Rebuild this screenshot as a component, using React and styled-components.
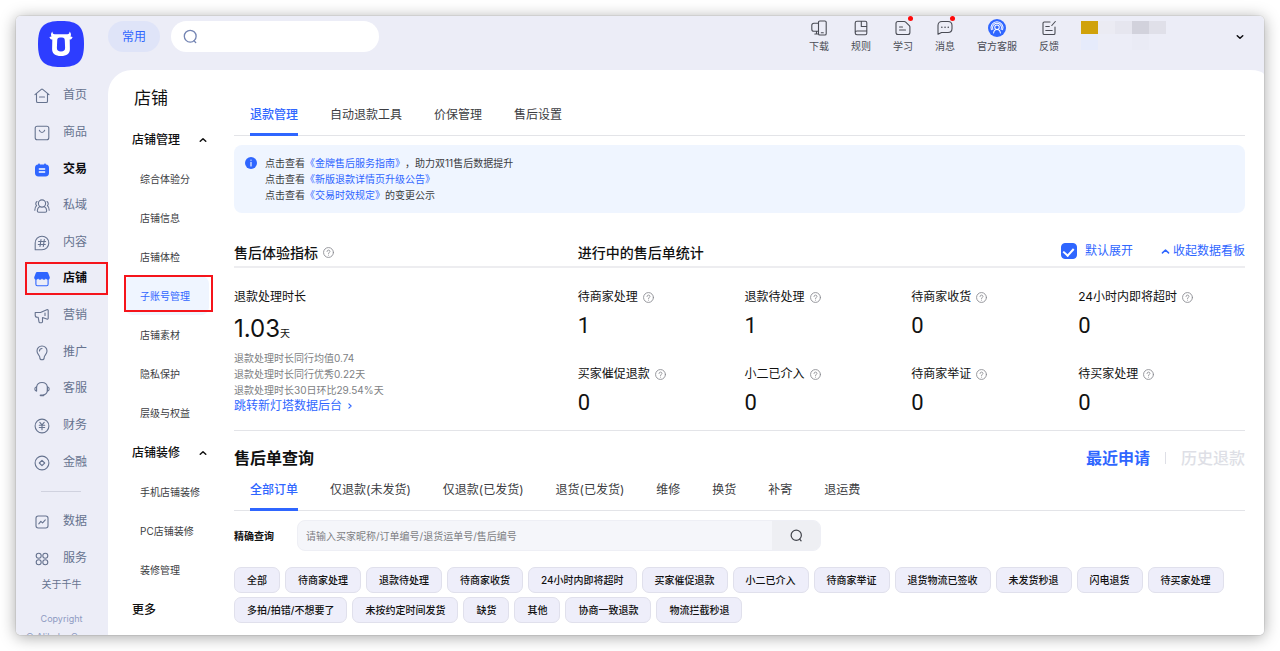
import React, { useState } from 'react';
import styled, { createGlobalStyle, css } from 'styled-components';

const GlobalStyle = createGlobalStyle`
  * {
    box-sizing: border-box;
  }

  body {
    margin: 0;
    background: #ffffff;
    color: #111111;
    font-family: Inter, 'Noto Sans CJK SC', sans-serif;
    font-size: 12px;
    text-spacing-trim: space-all;
  }

  button,
  input {
    border: 0;
    padding: 0;
    background: none;
    color: inherit;
    font: inherit;
  }

  button {
    cursor: pointer;
  }

  a {
    color: inherit;
    text-decoration: none;
  }

  ul,
  h1,
  h2,
  h3,
  p,
  dl,
  dd {
    margin: 0;
    padding: 0;
    list-style: none;
  }
`;

const blue = '#2f66ff';

const Page = styled.div`
  height: 100vh;
  min-width: 1100px;
  padding: 16px;
`;

const Window = styled.div`
  display: flex;
  height: 100%;
  overflow: hidden;
  border-radius: 5px;
  background: #ecedf7;
`;

const Shadow = styled.div`
  height: 100%;
  border-radius: 5px;
  box-shadow: 0 0 0 1px rgba(0, 0, 0, 0.06), 0 2px 16px rgba(0, 0, 0, 0.36);
`;

const Sidebar = styled.aside`
  display: flex;
  flex: none;
  flex-direction: column;
  width: 92px;
  padding: 5px 0 0 9px;
  color: #66738f;
`;

const Logo = styled.svg`
  flex: none;
  width: 46px;
  height: 46px;
  margin: 0 0 11px 13px;
`;

const SideList = styled.ul`
  display: grid;
  flex: none;
  grid-auto-rows: 1fr;
  min-height: ${({ $height }) => $height}px;
`;

const marked = css`
  position: relative;

  &::after {
    content: '';
    position: absolute;
    inset: ${({ $inset }) => $inset};
    border: 2px solid #f5141b;
  }
`;

const SideItem = styled.li`
  ${({ $marked }) => $marked && marked}
`;

const SideLink = styled.a`
  display: flex;
  align-items: center;
  gap: 13px;
  height: 100%;
  padding-left: 9px;
  color: ${({ $active }) => ($active ? '#0b0b0f' : 'inherit')};
  font-weight: ${({ $active }) => ($active ? 700 : 400)};
  line-height: 16px;

  svg {
    color: ${({ $active }) => ($active ? blue : 'inherit')};
  }
`;

const SideText = styled.span`
  padding-bottom: 2px;
`;

const SideDivider = styled.hr`
  flex: none;
  width: 40px;
  height: 1px;
  margin: 10px 0 12px 16px;
  border: 0;
  background: #d0d2df;
`;

const About = styled.a`
  padding-right: 10px;
  font-size: 10px;
  line-height: 14px;
  text-align: center;
`;

const Copyright = styled.p`
  margin-top: 19px;
  padding-right: 10px;
  color: #8e9bc2;
  font-size: 9px;
  line-height: 18px;
  text-align: center;
  white-space: nowrap;
`;

const Body = styled.div`
  display: flex;
  flex: 1;
  flex-direction: column;
  min-width: 0;
`;

const Header = styled.header`
  display: flex;
  flex: none;
  align-items: flex-start;
  height: 54px;
  padding: 5px 20px 0 0;
`;

const CommonButton = styled.button`
  width: 52px;
  height: 31px;
  margin-right: 11px;
  border-radius: 16px;
  background: #dfe4f8;
  color: ${blue};
  line-height: 29px;
`;

const GlobalSearch = styled.label`
  display: flex;
  align-items: center;
  gap: 8px;
  width: 208px;
  height: 31px;
  padding: 0 12px;
  border-radius: 16px;
  background: #ffffff;
  color: #7485b3;

  input {
    flex: 1;
    min-width: 0;
    outline: none;
  }
`;

const Tools = styled.nav`
  display: flex;
  gap: 22px;
  margin-left: auto;
`;

const Tool = styled.a`
  display: flex;
  flex-direction: column;
  align-items: center;
  color: #4a4c55;
  font-size: 10px;
  line-height: 14px;
  white-space: nowrap;
`;

const ToolIcon = styled.span`
  position: relative;
  display: flex;
  align-items: center;
  justify-content: center;
  height: 18px;
  margin: -2px 0 2px;

  &::after {
    content: '';
    position: absolute;
    top: -3px;
    right: -2px;
    display: ${({ $dot }) => ($dot ? 'block' : 'none')};
    width: 5px;
    height: 5px;
    border-radius: 50%;
    background: #ff0a0a;
  }
`;

const Account = styled.button`
  display: flex;
  align-items: flex-start;
  gap: 70px;
  margin-left: 22px;
`;

const Mosaic = styled.span`
  display: grid;
  grid-template-columns: repeat(5, 17px);
  grid-template-rows: 13px 16px;
`;

const Tile = styled.span`
  background: ${({ $color }) => $color};
`;

const AccountArrow = styled.span`
  display: flex;
  align-items: center;
  height: 31px;
  color: #0b0b0f;
`;

const Panel = styled.div`
  display: flex;
  flex: 1;
  min-height: 0;
  border-radius: 24px 14px 0 0 / 24px 5px 0 0;
  background: #ffffff;
`;

const Menu = styled.nav`
  flex: none;
  width: 126px;
  padding: 15px 21px 0 17px;
`;

const MenuTitle = styled.h1`
  padding: 0 0 8px 9px;
  font-size: 17px;
  font-weight: 400;
  line-height: 26px;
`;

const MenuGroup = styled.button`
  display: flex;
  align-items: center;
  justify-content: space-between;
  width: 100%;
  height: 20px;
  margin-top: 11px;
  padding: 0 6px 0 7px;
  font-weight: 500;
  line-height: 18px;
`;

const MenuList = styled.ul`
  padding-top: 9px;
`;

const MenuItem = styled.li`
  ${({ $marked }) => $marked && marked}
`;

const MenuLink = styled.a`
  display: flex;
  align-items: center;
  width: 84px;
  height: 39px;
  padding-left: 15px;
  border-radius: 8px;
  background: ${({ $active }) => ($active ? '#eff5ff' : 'none')};
  color: ${({ $active }) => ($active ? blue : '#3c3d42')};
  font-size: 10px;
  white-space: nowrap;
`;

const Main = styled.main`
  flex: 1;
  min-width: 0;
  padding: 24px 19px 0 0;
`;

const TabList = styled.div`
  display: flex;
  gap: 32px;
  padding: 0 16px;
  box-shadow: inset 0 -1px #e3e4e8;
`;

const Tab = styled.button`
  height: 42px;
  border-bottom: 3px solid ${({ $active }) => ($active ? blue : 'transparent')};
  color: ${({ $active }) => ($active ? blue : '#3c3d42')};
  font-weight: ${({ $active }) => ($active ? 500 : 400)};
  white-space: nowrap;
`;

const Notice = styled.section`
  display: flex;
  gap: 8px;
  margin-top: 9px;
  padding: 10px 11px;
  border-radius: 8px;
  background: #eff5ff;
  color: #3c3d42;
  font-size: 10px;
  line-height: 16px;

  svg {
    margin-top: 2px;
  }
`;

const Link = styled.a`
  color: ${blue};
`;

const Columns = styled.div`
  display: grid;
  grid-template-columns: 34fr 66fr;
`;

const BoardHeader = styled(Columns)`
  align-items: center;
  height: 29px;
  margin-top: 26px;
  border-bottom: 2px solid #ededf0;
`;

const BoardTitle = styled.h2`
  display: flex;
  align-items: center;
  gap: 5px;
  font-size: 14px;
  font-weight: 500;
  line-height: 20px;
`;

const BoardRight = styled.div`
  display: flex;
  align-items: center;
  justify-content: space-between;
`;

const BoardActions = styled.div`
  display: flex;
  align-items: center;
  gap: 28px;
  padding-bottom: 3px;
  color: ${blue};
  line-height: 16px;
`;

const CheckLabel = styled.label`
  display: flex;
  align-items: center;
  gap: 8px;
`;

const Checkbox = styled.input`
  display: grid;
  justify-content: center;
  width: 16px;
  height: 16px;
  margin: 0;
  border: 1px solid ${blue};
  border-radius: 4px;
  appearance: none;

  &:checked {
    background: ${blue};
  }

  &:checked::after {
    content: '';
    width: 5px;
    height: 8px;
    margin-top: 2px;
    border: solid #ffffff;
    border-width: 0 2px 2px 0;
    transform: rotate(42deg);
  }
`;

const Collapse = styled.button`
  display: flex;
  align-items: center;
  gap: 3px;
`;

const Board = styled(Columns)`
  padding: 20px 0 15px;
  border-bottom: 1px solid #e3e4e8;
`;

const Label = styled.dt`
  display: flex;
  align-items: center;
  gap: 5px;
  font-size: 12px;
  line-height: 18px;
  white-space: nowrap;
`;

const Duration = styled.dd`
  margin: 8px 0 6px;
  font-size: 24px;
  line-height: 30px;

  small {
    font-size: 10px;
    line-height: 10px;
  }
`;

const Comparison = styled.dd`
  color: #7e7f84;
  font-size: 10px;
  line-height: 16px;
`;

const BoardLink = styled.a`
  display: flex;
  align-items: center;
  gap: 5px;
  color: ${blue};
  line-height: 16px;
`;

const Stats = styled.div`
  display: grid;
  grid-template-columns: repeat(4, 1fr);
  align-content: start;
  row-gap: 27px;
`;

const StatValue = styled.dd`
  margin-top: 8px;
  font-family: Roboto, sans-serif;
  font-size: 22px;
  line-height: 24px;
`;

const QueryHeader = styled.div`
  display: flex;
  justify-content: space-between;
  padding-top: 16px;
  font-size: 16px;
  line-height: 22px;
`;

const QueryTitle = styled.h2`
  font-size: 16px;
  font-weight: 700;
`;

const Ranges = styled.div`
  display: flex;
  align-items: center;
  gap: 15px;
`;

const RangeDivider = styled.span`
  width: 1px;
  height: 12px;
  background: #dedfe6;
`;

const Range = styled.button`
  color: ${({ $active }) => ($active ? blue : '#dedfe6')};
  font-weight: ${({ $active }) => ($active ? 700 : 500)};
`;

const SearchRow = styled.form`
  display: flex;
  align-items: center;
  margin-top: 9px;
`;

const SearchLabel = styled.label`
  width: 63px;
  font-size: 10px;
  font-weight: 700;
`;

const SearchBox = styled.div`
  display: flex;
  width: 524px;
  height: 31px;
  overflow: hidden;
  border: 1px solid #eeeff5;
  border-radius: 8px;
  background: #f5f6fa;
`;

const SearchInput = styled.input`
  flex: 1;
  min-width: 0;
  padding: 0 8px;
  outline: none;
  font-size: 10px;

  &::placeholder {
    color: #7e7f84;
  }
`;

const SearchButton = styled.button`
  display: flex;
  align-items: center;
  justify-content: center;
  width: 48px;
  background: #eeeff3;
  color: #44464d;
`;

const Chips = styled.div`
  display: flex;
  flex-wrap: wrap;
  gap: 4px 5px;
  margin-top: 16px;
`;

const Chip = styled.button`
  height: 26px;
  padding: 0 12px;
  border: 1px solid #e0e0ec;
  border-radius: 7px;
  background: #eeeefa;
  font-size: 10px;
  font-weight: 500;
  line-height: 22px;
  white-space: nowrap;
`;

const Svg = styled.svg`
  flex: none;
  fill: none;
  stroke: currentColor;
  stroke-linecap: round;
  stroke-linejoin: round;
`;

const shapes = {
  home: (
    <>
      <path d="M1 6.6 7.3 1.4a1.2 1.2 0 0 1 1.4 0L15 6.6M2.5 5.8v7.4c0 .8.6 1.3 1.3 1.3h8.4c.7 0 1.3-.5 1.3-1.3V5.8" />
      <path d="M5.5 9h5" />
    </>
  ),
  goods: (
    <>
      <rect x="1.2" y="1.2" width="13.6" height="13.6" rx="2" />
      <path d="M5.3 5.2c.5 1.6 1.5 2.3 2.7 2.3s2.2-.7 2.7-2.3" />
    </>
  ),
  trade: (
    <>
      <path
        d="M4.5 1.5h1l.5.9h4l.5-.9h1l.5.9c2 .2 3 1.4 3 3.3V11c0 2.3-1.2 3.5-3.5 3.5h-7C2.2 14.5 1 13.3 1 11V5.7c0-1.9 1-3.1 3-3.3z"
        fill="currentColor"
        stroke="none"
      />
      <path d="M5.3 7h5.4M5.3 10h5.4" stroke="#ffffff" strokeWidth="1.3" />
    </>
  ),
  people: (
    <>
      <circle cx="8" cy="5.5" r="3.6" />
      <path d="M5.8 8.5c-1.700.9-2.500 2.300-2.500 4.200 0 1 .7 1.600 1.500 1.600h6.400c.8 0 1.500-.6 1.500-1.600 0-1.900-.8-3.300-2.500-4.200" />
      <path d="M3 3.5C1.5 4.400 1.400 6.400 2.600 7.600 1.400 8.600.7 9.900.8 12.200M13 3.500c1.500.9 1.600 2.900.4 4.100 1.200 1 1.900 2.300 1.800 4.600" />
    </>
  ),
  content: (
    <>
      <path d="M1.2 14.8V8A6.8 6.8 0 1 1 8 14.8z" />
      <path d="m7 4.5-1 7M10.3 4.5l-1 7M4.6 6.5h7M4.3 9.500h7" />
    </>
  ),
  shop: (
    <>
      <path
        d="M3 1h10c.5 0 .9.3 1.100.8L15.700 6c.4 1.600-.6 2.700-1.900 2.700-1 0-1.600-.5-1.900-1.200-.4.8-1.100 1.200-1.900 1.200-.9 0-1.600-.4-2-1.200-.4.8-1.100 1.200-2 1.200-.8 0-1.500-.4-1.900-1.200-.3.7-.9 1.200-1.900 1.200C.9 8.700-.1 7.600.3 6l1.600-4.200C2.100 1.300 2.500 1 3 1z"
        fill="currentColor"
        stroke="none"
      />
      <path d="M1.9 8v5.300c0 .8.6 1.400 1.400 1.400h9.400c.8 0 1.400-.6 1.400-1.400V8" />
    </>
  ),
  horn: (
    <>
      <path d="M1.2 4.5h5.300l6.300-2.800c.7-.3 1.400.1 1.400.8v7.800c0 .7-.7 1.100-1.400.8L8.500 9.600v4.200c0 .6-.4.9-.9.9H6c-.5 0-.9-.3-1-.8L4.200 9.300h-1C2 9.300 1.200 8.400 1.200 7.300z" />
      <path d="M11 5v2.500" />
    </>
  ),
  bulb: (
    <>
      <path d="M5.800 12.300c0-1.700-2.800-3-2.800-6.300a5 5 0 0 1 10 0c0 3.300-2.800 4.600-2.800 6.300v.5c0 1.200-.9 2-2.200 2s-2.200-.8-2.200-2z" />
      <path d="M5.500 6C5.500 4.600 6.500 3.700 8 3.500" />
    </>
  ),
  headset: (
    <>
      <path d="M2.600 6C3 3.400 5.200 1.500 8 1.500s5 1.900 5.400 4.500v3c0 2.300-1.700 4.400-3.900 5" />
      <path d="M2.600 5.800C1.500 6 .8 6.800.8 8s.7 2 1.800 2.200zM13.400 5.800c1.100.2 1.800 1 1.800 2.200s-.7 2-1.800 2.200z" />
      <path d="M6.500 14.300h3" strokeWidth="1.7" />
    </>
  ),
  money: (
    <>
      <circle cx="8" cy="8" r="6.9" />
      <path d="M5.8 4.300 8 6.800l2.200-2.500M8 6.800v5M5.300 7.200h5.400M5.300 9.500h5.400" />
    </>
  ),
  finance: (
    <>
      <circle cx="8" cy="8" r="6.9" />
      <path d="m8 5.300 2.700 2.700L8 10.700 5.300 8z" />
    </>
  ),
  data: (
    <>
      <rect x="2" y="2" width="12" height="12" rx="2.2" />
      <path d="m4.800 9.800 2-2.500 1.800 1.500 2.700-3" />
    </>
  ),
  service: (
    <>
      <circle cx="4.7" cy="4.7" r="2.5" />
      <circle cx="11.3" cy="4.7" r="2.5" />
      <circle cx="4.7" cy="11.3" r="2.5" />
      <circle cx="11.3" cy="11.3" r="2.5" />
    </>
  ),
  search: (
    <>
      <circle cx="7.7" cy="7.7" r="6.3" />
      <path d="m11.800 12.500 1.800 2" />
    </>
  ),
  download: (
    <>
      <rect x="7.5" y="1" width="7.7" height="14" rx="1.3" />
      <path d="M7.500 3.200H3C1.800 3.200.8 4.100.8 5.300v3.900c0 1.200 1 2.100 2.200 2.100h4.500M3.800 14h3.700M5.500 11.500V14M10.300 12.700h2" />
    </>
  ),
  rule: (
    <path d="M4 1.300h8.300c.9 0 1.500.6 1.500 1.500v10.400c0 .9-.6 1.500-1.500 1.500H4c-1 0-1.800-.8-1.800-1.700V3c0-.9.8-1.700 1.800-1.700zM2.300 12.500c0-1 .7-1.500 1.700-1.500h9.800M8.300 1.500v5h5.500" />
  ),
  study: (
    <>
      <path d="M3 1.500h6.300c.6 0 1 .2 1.400.6l3.600 3.500c.4.4.6.9.6 1.400v5.500c0 1.100-.9 2-2 2H3c-1.100 0-2-.9-2-2v-9c0-1.100.9-2 2-2z" />
      <path d="M4.500 7h3M4.500 10h6" />
    </>
  ),
  message: (
    <>
      <path d="M5 1.500h6c2.500 0 4 1.500 4 4v3c0 2.500-1.500 4-4 4H4.500L1 14.300V5.500c0-2.500 1.500-4 4-4z" />
      <path d="M4.800 7.200h.1M8 7.200h.1M11.200 7.200h.1" strokeWidth="1.5" />
    </>
  ),
  support: (
    <>
      <circle cx="8" cy="8" r="8" fill={blue} stroke="none" />
      <g stroke="#ffffff" strokeWidth="0.9">
        <circle cx="8" cy="7.3" r="2" />
        <path d="M4.300 9.300a4 4 0 1 1 7.400 0M5 12.500c.2-2 1.300-3.200 3-3.200s2.800 1.200 3 3.200M3 9.500a5.300 5.300 0 1 1 10 0" />
      </g>
    </>
  ),
  feedback: (
    <path d="M9 2H3.300C2.600 2 2 2.600 2 3.300v9.900c0 .7.6 1.300 1.300 1.300h9.400c.7 0 1.300-.6 1.300-1.300V7M14.300 1.500l-3.500 4M4.800 6.500h3.500M4.800 10.500h6.400" />
  ),
  help: (
    <>
      <circle cx="8" cy="8" r="7.2" />
      <path d="M5.900 6.500C6 5.200 6.800 4.500 8 4.500s2.100.8 2.100 1.900c0 1.400-2.100 1.600-2.100 3.200M8 11.800v.1" />
    </>
  ),
  info: (
    <>
      <circle cx="8" cy="8" r="8" fill={blue} stroke="none" />
      <path d="M8 7v5M8 4.200v.1" stroke="#ffffff" strokeWidth="1.5" />
    </>
  ),
  up: <path d="m2.500 10.500 5.500-5 5.500 5" />,
  down: <path d="m2.500 5.500 5.500 5 5.500-5" />,
  right: <path d="m5 2.500 6 5.500-6 5.500" />,
};

function Icon({ name, size = 15, stroke = 1.1 }) {
  return (
    <Svg
      viewBox="0 0 16 16"
      width={size}
      height={size}
      strokeWidth={stroke}
      aria-hidden="true"
    >
      {shapes[name]}
    </Svg>
  );
}

const HelpWrap = styled.span`
  display: inline-flex;
  color: #8c8d93;
`;

function Help() {
  return (
    <HelpWrap>
      <Icon name="help" size={11} stroke={1.3} />
    </HelpWrap>
  );
}

const sideItems = [
  ['home', '首页'],
  ['goods', '商品'],
  ['trade', '交易', true],
  ['people', '私域'],
  ['content', '内容'],
  ['shop', '店铺', true, true],
  ['horn', '营销'],
  ['bulb', '推广'],
  ['headset', '客服'],
  ['money', '财务'],
  ['finance', '金融'],
];

const extraItems = [
  ['data', '数据'],
  ['service', '服务'],
];

const tools = [
  ['download', '下载'],
  ['rule', '规则'],
  ['study', '学习', true],
  ['message', '消息', true],
  ['support', '官方客服'],
  ['feedback', '反馈'],
];

const tiles = [
  '#d0a20c',
  '#ebebf3',
  '#e6e6ef',
  '#d2d2dc',
  '#e0e0e9',
  '#e6ebfb',
  '#ecedf7',
  '#ecedf7',
  '#eaebf5',
  '#ecedf7',
];

const menuGroups = [
  {
    title: '店铺管理',
    items: [
      '综合体验分',
      '店铺信息',
      '店铺体检',
      '子账号管理',
      '店铺素材',
      '隐私保护',
      '层级与权益',
    ],
  },
  { title: '店铺装修', items: ['手机店铺装修', 'PC店铺装修', '装修管理'] },
];

const pageTabs = ['退款管理', '自动退款工具', '价保管理', '售后设置'];

const orderTabs = [
  '全部订单',
  '仅退款(未发货)',
  '仅退款(已发货)',
  '退货(已发货)',
  '维修',
  '换货',
  '补寄',
  '退运费',
];

const stats = [
  ['待商家处理', 1],
  ['退款待处理', 1],
  ['待商家收货', 0],
  ['24小时内即将超时', 0],
  ['买家催促退款', 0],
  ['小二已介入', 0],
  ['待商家举证', 0],
  ['待买家处理', 0],
];

const filters = [
  '全部',
  '待商家处理',
  '退款待处理',
  '待商家收货',
  '24小时内即将超时',
  '买家催促退款',
  '小二已介入',
  '待商家举证',
  '退货物流已签收',
  '未发货秒退',
  '闪电退货',
  '待买家处理',
  '多拍/拍错/不想要了',
  '未按约定时间发货',
  '缺货',
  '其他',
  '协商一致退款',
  '物流拦截秒退',
];

function SideNav({ items, height }) {
  return (
    <SideList $height={height}>
      {items.map(([icon, text, active, isMarked]) => (
        <SideItem key={text} $marked={isMarked} $inset="1px 0 3px">
          <SideLink href="#" $active={active}>
            <Icon name={icon} size={16} />
            <SideText>{text}</SideText>
          </SideLink>
        </SideItem>
      ))}
    </SideList>
  );
}

function Tabs({ items }) {
  const [current, setCurrent] = useState(items[0]);

  return (
    <TabList role="tablist">
      {items.map((item) => (
        <Tab
          key={item}
          type="button"
          role="tab"
          aria-selected={item === current}
          $active={item === current}
          onClick={() => setCurrent(item)}
        >
          {item}
        </Tab>
      ))}
    </TabList>
  );
}

export default function App() {
  const [expanded, setExpanded] = useState(true);

  return (
    <>
      <GlobalStyle />
      <Page>
        <Shadow>
          <Window>
            <Sidebar>
              <Logo viewBox="0 0 46 46" aria-label="千牛">
                <path
                  d="M23 0c17.5 0 23 5.5 23 23s-5.5 23-23 23S0 40.5 0 23 5.5 0 23 0z"
                  fill="#2d3dff"
                />
                <path
                  fillRule="evenodd"
                  d="M14.400 10.600c0 1.700.6 2.600 2.300 2.600h12.600c1.700 0 2.300-.9 2.300-2.600 1.500 1.400 1.800 3.400.9 5l2.100.3c-.4 1.700-1.500 2.500-2.900 2.600l.2 9.400c.1 4.600-3.200 7-8.900 7s-9-2.400-8.900-7l.2-9.400c-1.400-.1-2.500-.9-2.900-2.600l2.100-.3c-.9-1.600-.6-3.600.9-5zM22 16.600c-1.900 0-2.700.9-2.800 2.800l-.3 7.700c-.1 2.400 1.300 3.400 4.100 3.400s4.200-1 4.100-3.400l-.3-7.700c-.1-1.900-.9-2.800-2.800-2.800z"
                  fill="#ffffff"
                />
              </Logo>
              <SideNav items={sideItems} height={403} />
              <SideDivider />
              <SideNav items={extraItems} height={73} />
              <About href="#">关于千牛</About>
              <Copyright>
                Copyright
                <br />© Alibaba Group
              </Copyright>
            </Sidebar>

            <Body>
              <Header>
                <CommonButton type="button">常用</CommonButton>
                <GlobalSearch>
                  <Icon name="search" size={15} stroke={1.4} />
                  <input type="search" aria-label="搜索" />
                </GlobalSearch>
                <Tools>
                  {tools.map(([icon, text, dot]) => (
                    <Tool key={text} href="#">
                      <ToolIcon $dot={dot}>
                        <Icon name={icon} size={icon === 'support' ? 18 : 16} />
                      </ToolIcon>
                      {text}
                    </Tool>
                  ))}
                </Tools>
                <Account type="button" aria-label="账号">
                  <Mosaic>
                    {tiles.map((color, i) => (
                      <Tile key={i} $color={color} />
                    ))}
                  </Mosaic>
                  <AccountArrow>
                    <Icon name="down" size={8} stroke={3} />
                  </AccountArrow>
                </Account>
              </Header>

              <Panel>
                <Menu>
                  <MenuTitle>店铺</MenuTitle>
                  {menuGroups.map(({ title, items }) => (
                    <React.Fragment key={title}>
                      <MenuGroup type="button">
                        {title}
                        <Icon name="up" size={8} stroke={3} />
                      </MenuGroup>
                      <MenuList>
                        {items.map((item) => {
                          const active = item === '子账号管理';
                          return (
                            <MenuItem
                              key={item}
                              $marked={active}
                              $inset="-1px 0 3px -1px"
                            >
                              <MenuLink href="#" $active={active}>
                                {item}
                              </MenuLink>
                            </MenuItem>
                          );
                        })}
                      </MenuList>
                    </React.Fragment>
                  ))}
                  <MenuGroup type="button">更多</MenuGroup>
                </Menu>

                <Main>
                  <Tabs items={pageTabs} />
                  <Notice>
                    <Icon name="info" size={12} />
                    <div>
                      <p>
                        点击查看<Link href="#">《金牌售后服务指南》</Link>
                        ，助力双11售后数据提升
                      </p>
                      <p>
                        点击查看<Link href="#">《新版退款详情页升级公告》</Link>
                      </p>
                      <p>
                        点击查看<Link href="#">《交易时效规定》</Link>
                        的变更公示
                      </p>
                    </div>
                  </Notice>

                  <BoardHeader>
                    <BoardTitle>
                      售后体验指标 <Help />
                    </BoardTitle>
                    <BoardRight>
                      <BoardTitle>进行中的售后单统计</BoardTitle>
                      <BoardActions>
                        <CheckLabel>
                          <Checkbox
                            type="checkbox"
                            checked={expanded}
                            onChange={(e) => setExpanded(e.target.checked)}
                          />
                          默认展开
                        </CheckLabel>
                        <Collapse type="button">
                          <Icon name="up" size={9} stroke={2.6} />
                          收起数据看板
                        </Collapse>
                      </BoardActions>
                    </BoardRight>
                  </BoardHeader>
                  <Board>
                    <div>
                      <dl>
                        <Label>退款处理时长</Label>
                        <Duration>
                          1.03<small>天</small>
                        </Duration>
                        <Comparison>退款处理时长同行均值0.74</Comparison>
                        <Comparison>退款处理时长同行优秀0.22天</Comparison>
                        <Comparison>退款处理时长30日环比29.54%天</Comparison>
                      </dl>
                      <BoardLink href="#">
                        跳转新灯塔数据后台
                        <Icon name="right" size={6} stroke={3} />
                      </BoardLink>
                    </div>
                    <Stats>
                      {stats.map(([label, value]) => (
                        <dl key={label}>
                          <Label>
                            {label} <Help />
                          </Label>
                          <StatValue>{value}</StatValue>
                        </dl>
                      ))}
                    </Stats>
                  </Board>

                  <QueryHeader>
                    <QueryTitle>售后单查询</QueryTitle>
                    <Ranges>
                      <Range type="button" $active>
                        最近申请
                      </Range>
                      <RangeDivider />
                      <Range type="button">历史退款</Range>
                    </Ranges>
                  </QueryHeader>
                  <Tabs items={orderTabs} />
                  <SearchRow onSubmit={(e) => e.preventDefault()}>
                    <SearchLabel htmlFor="keyword">精确查询</SearchLabel>
                    <SearchBox>
                      <SearchInput
                        id="keyword"
                        placeholder="请输入买家昵称/订单编号/退货运单号/售后编号"
                      />
                      <SearchButton aria-label="查询">
                        <Icon name="search" size={13} stroke={1.5} />
                      </SearchButton>
                    </SearchBox>
                  </SearchRow>
                  <Chips>
                    {filters.map((filter) => (
                      <Chip key={filter} type="button">
                        {filter}
                      </Chip>
                    ))}
                  </Chips>
                </Main>
              </Panel>
            </Body>
          </Window>
        </Shadow>
      </Page>
    </>
  );
}
